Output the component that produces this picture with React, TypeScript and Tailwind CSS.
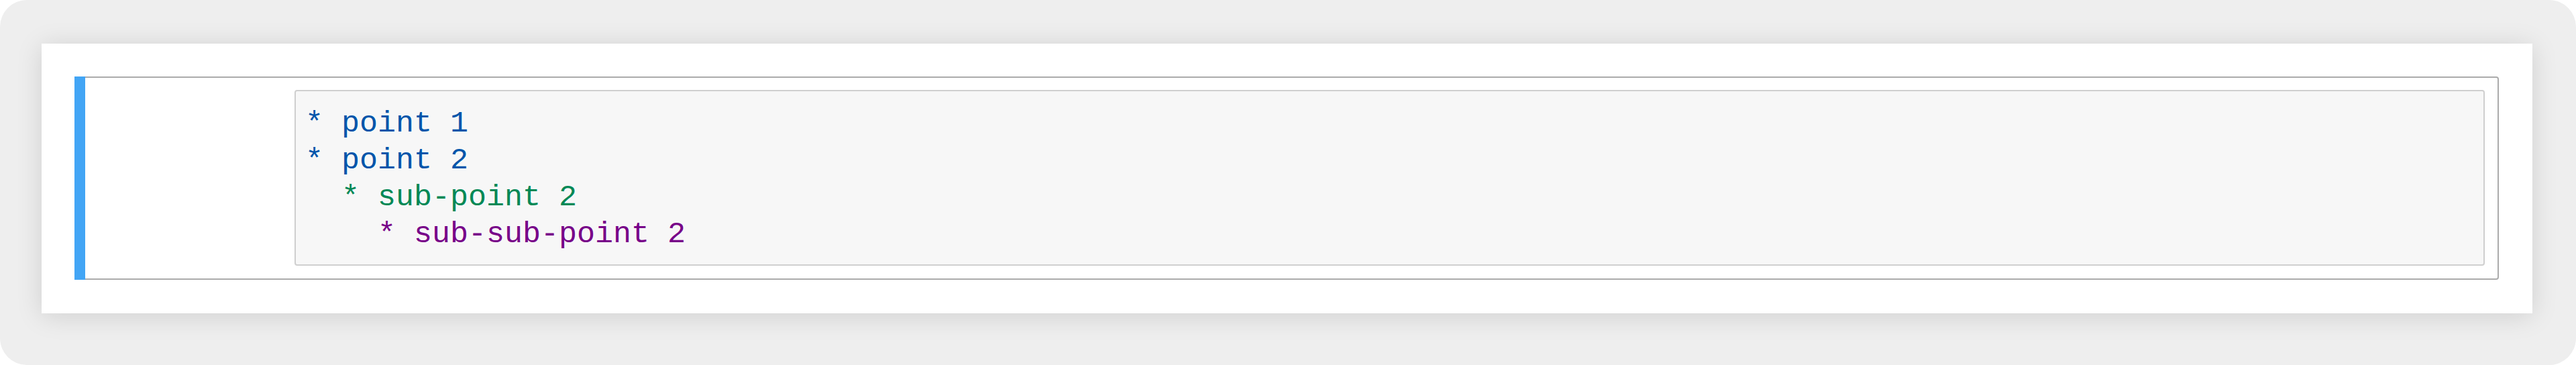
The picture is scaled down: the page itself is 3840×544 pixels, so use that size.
const lines = [
  { text: '* point 1', color: 'text-[#0055aa]' },
  { text: '* point 2', color: 'text-[#0055aa]' },
  { text: '  * sub-point 2', color: 'text-[#008855]' },
  { text: '    * sub-sub-point 2', color: 'text-[#770088]' },
]

function MarkdownCell() {
  return (
    <div className="flex">
      <div className="w-[16px] shrink-0 bg-[#42a5f5]" />
      <div className="flex flex-1 rounded-r-[4px] border-2 border-l-0 border-[#ababab] pt-[18px] pb-[19px] pr-[19px]">
        {/* empty prompt area */}
        <div className="w-[312px] shrink-0" />
        <pre
          className="flex-1 rounded-[4px] border-2 border-[#cfcfcf] bg-[#f7f7f7] pt-[21px] pb-[17px] pl-[14px] text-[45px] leading-[55px]"
          style={{ fontFamily: '"Liberation Mono", "DejaVu Sans Mono", monospace' }}
        >
          {lines.map((l) => (
            <div key={l.text} className={`whitespace-pre ${l.color}`}>
              {l.text}
            </div>
          ))}
        </pre>
      </div>
    </div>
  )
}

export default function App() {
  return (
    <div className="h-[544px] w-[3840px] bg-white">
      <div className="h-full rounded-[40px] bg-[#eeeeee] pt-[65px] pl-[62px] pr-[65px]">
        <div className="bg-white pt-[49px] pb-[50px] pl-[49px] pr-[50px] shadow-[0_4px_36px_rgba(0,0,0,0.13)]">
          <MarkdownCell />
        </div>
      </div>
    </div>
  )
}
